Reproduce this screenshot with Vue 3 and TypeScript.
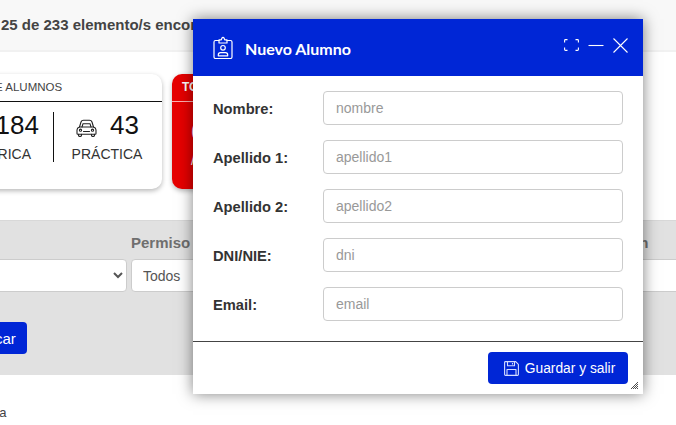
<script setup lang="ts">
const fields = [
  { label: 'Nombre:', placeholder: 'nombre' },
  { label: 'Apellido 1:', placeholder: 'apellido1' },
  { label: 'Apellido 2:', placeholder: 'apellido2' },
  { label: 'DNI/NIE:', placeholder: 'dni' },
  { label: 'Email:', placeholder: 'email' },
];
</script>

<template>
  <div class="page">
    <div class="topbar">25 de 233 elemento/s encontrados</div>

    <div class="stats">
      <div class="card">
        <div class="card__title">TOTAL DE ALUMNOS</div>
        <div class="card__body">
          <div class="stat stat--left">
            <div class="stat__num">184</div>
            <div class="stat__label">TEÓRICA</div>
          </div>
          <div class="stat stat--right">
            <div class="stat__num">
              <svg class="car" viewBox="0 0 21 18" fill="none" stroke="#222" stroke-width="1.100" stroke-linejoin="round" stroke-linecap="round">
                <path d="M3.500 8L5 3C5.400 1.800 6.300 1.200 7.500 1.200h6c1.200 0 2.100.6 2.500 1.800l1.500 5" />
                <path d="M3.500 8C2 8.500 1 9.700 1 11v3.500c0 .4.300.7.7.7h17.600c.4 0 .7-.3.7-.7V11c0-1.300-1-2.500-2.500-3H3.500z" />
                <path d="M2.500 15.200v1.300c0 .5.4.9.9.9h1.200c.5 0 .9-.4.9-.9v-1.300M15.500 15.200v1.300c0 .5.4.9.9.9h1.200c.5 0 .9-.4.9-.9v-1.300" />
                <path d="M7.500 12.500h6M6 8l1-3.300h7L15 8" />
                <circle cx="4.500" cy="11.200" r="1.100" />
                <circle cx="16.500" cy="11.200" r="1.100" />
              </svg>
              <span>43</span>
            </div>
            <div class="stat__label">PRÁCTICA</div>
          </div>
        </div>
      </div>
      <div class="card card--red">
        <div class="card__title">TOTAL</div>
        <div class="red__num">60</div>
        <div class="red__label">/ 233</div>
      </div>
    </div>

    <div class="filters">
      <div class="filters__row">
        <div class="filter filter--first">
          <select class="control"><option></option></select>
        </div>
        <div class="filter filter--permiso">
          <label>Permiso</label>
          <select class="control"><option>Todos</option></select>
        </div>
        <div class="filter filter--last">
          <label>Situación</label>
          <select class="control"><option>Todos</option></select>
        </div>
      </div>
      <button class="search">Buscar</button>
    </div>

    <div class="foot">Página</div>

    <div class="modal">
      <header class="modal__head">
        <svg class="modal__icon" viewBox="0 0 20 23" fill="none" stroke="#fff" stroke-width="1.200" stroke-linejoin="round" stroke-linecap="round">
          <path d="M6 4.500H2.500C1.700 4.500 1 5.200 1 6v15c0 .8.7 1.500 1.500 1.500h15c.8 0 1.500-.7 1.500-1.500V6c0-.8-.7-1.500-1.500-1.500H14" />
          <path d="M6 7V3.800h2.300L9 2c.4-.9 1.600-.9 2 0l.7 1.800H14V7H6z" />
          <circle cx="10" cy="11.800" r="2.300" />
          <path d="M5.300 19.800v-.9c0-1.200 1-2.200 2.200-2.200h5c1.200 0 2.200 1 2.200 2.200v.9H5.300z" />
        </svg>
        <span class="modal__title">Nuevo Alumno</span>
        <div class="modal__tools">
          <svg width="15" height="12" viewBox="0 0 15 12" fill="none" stroke="#fff" stroke-width="1.100">
            <path d="M.6 3.500V1.500C.6.900.9.600 1.500.600H3.500M11.500.600h2c.6 0 .9.300.9.9v2M14.400 8.500v2c0 .6-.3.9-.9.9h-2M3.500 11.400h-2c-.6 0-.9-.3-.9-.9v-2" />
          </svg>
          <svg width="16" height="13" viewBox="0 0 16 13" fill="none" stroke="#fff" stroke-width="1.100">
            <path d="M.5 6.500h15" />
          </svg>
          <svg width="15" height="15" viewBox="0 0 15 15" fill="none" stroke="#fff" stroke-width="1.100">
            <path d="M.5.500l14 14M14.500.500l-14 14" />
          </svg>
        </div>
      </header>

      <div class="modal__body">
        <div v-for="field in fields" :key="field.label" class="row">
          <label class="row__label">{{ field.label }}</label>
          <input class="row__input" type="text" :placeholder="field.placeholder" />
        </div>
      </div>

      <footer class="modal__foot">
        <button class="save">
          <svg width="15" height="15" viewBox="0 0 15 15" fill="none" stroke="#d5dcff" stroke-width="1.100" stroke-linejoin="round">
            <path d="M.6 1.500c0-.5.4-.9.9-.9h10.200l2.700 2.700v10.200c0 .5-.4.9-.9.9H1.500c-.5 0-.9-.4-.9-.9V1.500z" />
            <path d="M3.500.6v4.200h7V.6M8.500 2v1.500M3 14.400V8.500h9v5.900" />
          </svg>
          Guardar y salir
        </button>
        <svg class="grip" width="7" height="7" viewBox="0 0 7 7" stroke="#222" stroke-width=".8">
          <path d="M0 7L7 0M2 7L7 2M4 7L7 4M6 7L7 6" />
        </svg>
      </footer>
    </div>
  </div>
</template>

<style>
body {
  margin: 0;
}
</style>

<style scoped>
.page {
  position: relative;
  width: 676px;
  height: 425px;
  overflow: hidden;
  background: #fff;
  font-family: "Liberation Sans", Arial, sans-serif;
  color: #333;
}

.topbar {
  height: 50px;
  padding-left: 1px;
  background: #f8f8f8;
  border-bottom: 2px solid #f1f1f1;
  font-size: 15px;
  font-weight: 700;
  line-height: 50px;
  white-space: nowrap;
  color: #444;
}

.stats {
  display: flex;
  gap: 10px;
  margin: 22px 0 31px -68px;
}

.card {
  flex: none;
  width: 230px;
  height: 115px;
  background: #fff;
  border-radius: 10px;
  box-shadow: 0 2px 5px rgba(0, 0, 0, 0.28);
}

.card__title {
  height: 27px;
  padding-left: 16px;
  border-bottom: 1px solid #111;
  font-size: 11.500px;
  line-height: 26px;
  color: #444;
}

.card__body {
  display: flex;
  padding-top: 10px;
}

.stat {
  height: 50px;
  text-align: center;
}

.stat--left {
  box-sizing: border-box;
  width: 122px;
  text-align: right;
  border-right: 1px solid #111;
}

.stat--left .stat__num {
  padding-right: 14px;
}

.stat--left .stat__label {
  padding-right: 22px;
}

.stat--right {
  width: 106px;
}

.stat__num {
  display: flex;
  align-items: center;
  justify-content: flex-end;
  height: 26px;
  font-size: 26px;
  line-height: 26px;
  color: #111;
}

.stat--right .stat__num {
  justify-content: flex-start;
  gap: 13px;
  padding-left: 22px;
}

.car {
  width: 21px;
  height: 18px;
  margin-top: 5px;
}

.stat__label {
  margin-top: 8px;
  font-size: 14px;
  line-height: 17px;
  color: #333;
}

.card--red {
  background: #e60000;
}

.card--red .card__title {
  border-bottom-color: #ffb0b0;
  font-size: 12px;
  font-weight: 700;
  padding-left: 10px;
  color: #fff;
}

.red__num,
.red__label {
  padding-left: 19px;
  color: #fff;
}

.red__num {
  margin-top: 16px;
  font-size: 24px;
  line-height: 28px;
}

.red__label {
  margin-top: 6px;
  font-size: 14px;
  line-height: 17px;
}

.filters {
  height: 155px;
  box-sizing: border-box;
  padding-top: 14px;
  background: #e1e1e1;
  border-top: 1px solid #d8d8d8;
}

.filters__row {
  display: flex;
  gap: 4px;
  margin-left: -100px;
}

.filter {
  flex: none;
}

.filter label {
  display: block;
  height: 16px;
  margin-bottom: 8px;
  font-size: 15px;
  font-weight: 700;
  line-height: 16px;
  color: #6f6f6f;
  white-space: nowrap;
}

.filter--first {
  width: 227px;
  padding-top: 24px;
}

.filter--permiso {
  width: 446px;
}

.filter--last {
  width: 200px;
}

.control {
  display: block;
  width: 100%;
  height: 33px;
  padding-left: 7px;
  box-sizing: border-box;
  background: #fff;
  border: 1px solid #ccc;
  border-radius: 4px;
  font-family: inherit;
  font-size: 14px;
  color: #555;
}

.search {
  display: block;
  width: 69px;
  height: 32px;
  margin: 30px 0 0 -42px;
  padding: 0;
  background: #0026d6;
  border: 0;
  border-radius: 4px;
  font-family: inherit;
  font-size: 15px;
  color: #fff;
}

.foot {
  margin: 30px 0 0 -34px;
  font-size: 13px;
  line-height: 16px;
  color: #444;
}

.modal {
  position: absolute;
  left: 193px;
  top: 19px;
  display: flex;
  flex-direction: column;
  width: 450px;
  height: 375px;
  background: #fff;
  box-shadow: 0 0 14px rgba(0, 0, 0, 0.5);
}

.modal__head {
  display: flex;
  align-items: center;
  height: 57px;
  padding: 0 15px 0 20px;
  background: #0026d6;
  color: #fff;
}

.modal__icon {
  width: 20px;
  height: 23px;
  margin-top: -1px;
}

.modal__title {
  margin-left: 12px;
  padding-top: 2px;
  font-family: Lato, sans-serif;
  font-size: 16px;
  font-weight: 700;
}

.modal__tools {
  display: flex;
  align-items: center;
  gap: 9px;
  margin-left: auto;
  margin-top: -5px;
}

.modal__body {
  display: flex;
  flex-direction: column;
  gap: 15px;
  height: 266px;
  padding: 15px 20px 0;
  box-sizing: border-box;
  border-bottom: 1px solid #444;
}

.row {
  display: flex;
  align-items: center;
}

.row__label {
  width: 110px;
  padding-top: 1px;
  font-size: 14.700px;
  font-weight: 700;
  color: #333;
}

.row__input {
  width: 300px;
  height: 34px;
  padding: 0 12px;
  box-sizing: border-box;
  border: 1px solid #ccc;
  border-radius: 4px;
  font-family: inherit;
  font-size: 14px;
}

.row__input::placeholder {
  color: #999;
}

.modal__foot {
  position: relative;
  display: flex;
  flex: 1;
  justify-content: flex-end;
  padding: 10px 15px 0 0;
}

.save {
  display: flex;
  align-items: center;
  justify-content: center;
  gap: 6px;
  width: 140px;
  height: 32px;
  padding: 0 0 0 3px;
  background: #0026d6;
  border: 0;
  border-radius: 4px;
  font-family: inherit;
  font-size: 13.800px;
  color: #fff;
}

.grip {
  position: absolute;
  right: 5px;
  bottom: 5px;
}
</style>
